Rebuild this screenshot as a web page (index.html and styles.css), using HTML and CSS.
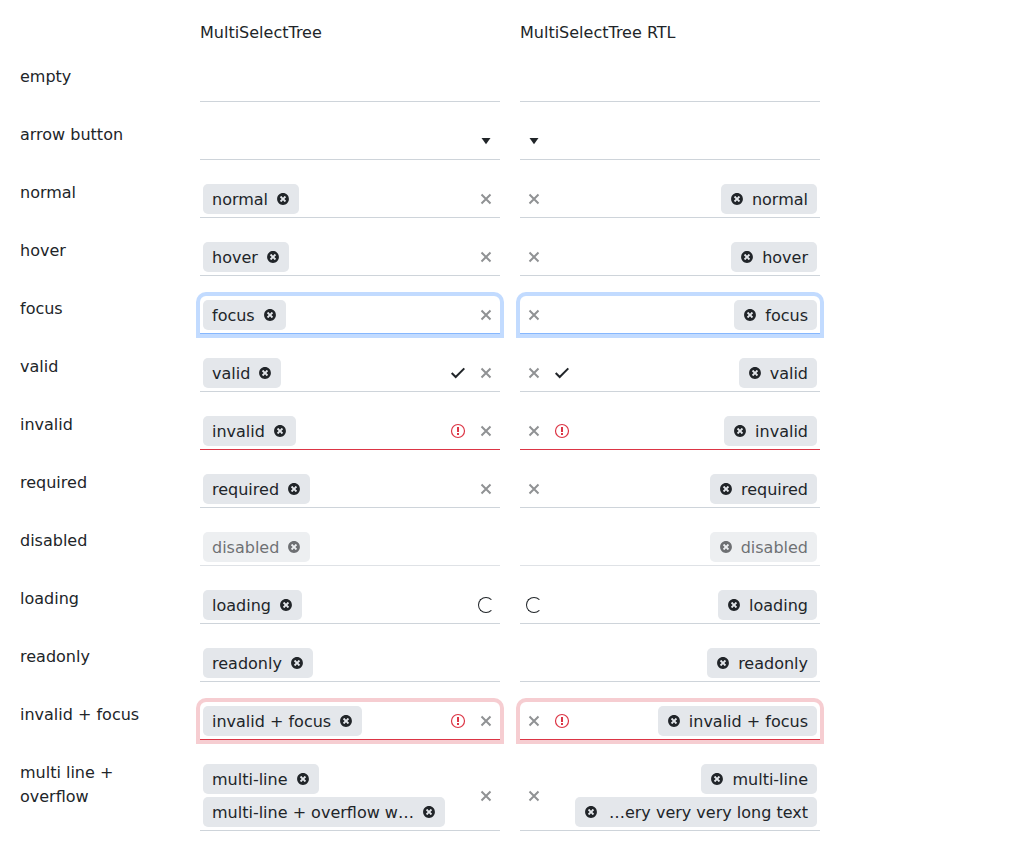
FILE: index.html
```
<!DOCTYPE html>
<html lang="en">
<head>
<meta charset="utf-8">
<title>MultiSelectTree</title>
<link rel="stylesheet" href="styles.css">
</head>
<body>
<svg class="sprite" aria-hidden="true">
  <symbol id="remove" viewBox="4 4 504 504"><path fill="currentColor" d="M256 8C119 8 8 119 8 256s111 248 248 248 248-111 248-248S393 8 256 8zm121.600 313.100c4.700 4.700 4.700 12.300 0 17L338 377.600c-4.700 4.700-12.300 4.700-17 0L256 312l-65.100 65.600c-4.700 4.700-12.300 4.700-17 0L134.400 338c-4.700-4.700-4.700-12.300 0-17l65.600-65-65.600-65.100c-4.700-4.700-4.700-12.300 0-17l39.600-39.600c4.700-4.700 12.300-4.700 17 0l65 65.700 65.100-65.600c4.700-4.700 12.300-4.700 17 0l39.600 39.600c4.700 4.700 4.700 12.300 0 17L312 256l65.600 65.100z"/></symbol>
  <symbol id="clear" viewBox="0 0 16 16"><path fill="none" stroke="currentColor" stroke-width="2" d="M3.500 3.500l9 9M12.500 3.500l-9 9"/></symbol>
  <symbol id="check" viewBox="0 0 16 16"><path fill="none" stroke="currentColor" stroke-width="2" d="M1.700 8l4 4L14.300 3.400"/></symbol>
  <symbol id="alert" viewBox="0 0 16 16"><circle cx="8" cy="8" r="6.500" fill="none" stroke="currentColor" stroke-width="1.200"/><path fill="currentColor" d="M7 4h2v5H7zM7 10h2v2H7z"/></symbol>
  <symbol id="arrow" viewBox="0 0 16 16"><path fill="currentColor" d="M3.500 5h9L8 11.200z"/></symbol>
</svg>
<main class="states">
  <span></span>
  <div>MultiSelectTree</div>
  <div>MultiSelectTree RTL</div>

  <label for="empty-ltr">empty</label>
  <div class="field"><input class="entry" id="empty-ltr"></div>
  <div class="field" dir="rtl"><input class="entry" aria-label="empty"></div>

  <label for="arrow-ltr">arrow button</label>
  <div class="field"><input class="entry" id="arrow-ltr"><button class="action arrow" aria-label="Open"><svg class="icon"><use href="#arrow"/></svg></button></div>
  <div class="field" dir="rtl"><input class="entry" aria-label="arrow button"><button class="action arrow" aria-label="Open"><svg class="icon"><use href="#arrow"/></svg></button></div>

  <div id="normal">normal</div>
  <div class="field" role="group" aria-labelledby="normal"><div class="tags"><span class="tag"><span>normal</span><button class="remove" aria-label="Remove"><svg><use href="#remove"/></svg></button></span></div><button class="action" aria-label="Clear"><svg class="icon"><use href="#clear"/></svg></button></div>
  <div class="field" dir="rtl" role="group" aria-labelledby="normal"><div class="tags"><span class="tag"><span>normal</span><button class="remove" aria-label="Remove"><svg><use href="#remove"/></svg></button></span></div><button class="action" aria-label="Clear"><svg class="icon"><use href="#clear"/></svg></button></div>

  <div id="hover">hover</div>
  <div class="field" role="group" aria-labelledby="hover"><div class="tags"><span class="tag"><span>hover</span><button class="remove" aria-label="Remove"><svg><use href="#remove"/></svg></button></span></div><button class="action" aria-label="Clear"><svg class="icon"><use href="#clear"/></svg></button></div>
  <div class="field" dir="rtl" role="group" aria-labelledby="hover"><div class="tags"><span class="tag"><span>hover</span><button class="remove" aria-label="Remove"><svg><use href="#remove"/></svg></button></span></div><button class="action" aria-label="Clear"><svg class="icon"><use href="#clear"/></svg></button></div>

  <div id="focus">focus</div>
  <div class="field focus" role="group" aria-labelledby="focus"><div class="tags"><span class="tag"><span>focus</span><button class="remove" aria-label="Remove"><svg><use href="#remove"/></svg></button></span></div><button class="action" aria-label="Clear"><svg class="icon"><use href="#clear"/></svg></button></div>
  <div class="field focus" dir="rtl" role="group" aria-labelledby="focus"><div class="tags"><span class="tag"><span>focus</span><button class="remove" aria-label="Remove"><svg><use href="#remove"/></svg></button></span></div><button class="action" aria-label="Clear"><svg class="icon"><use href="#clear"/></svg></button></div>

  <div id="valid">valid</div>
  <div class="field" role="group" aria-labelledby="valid"><div class="tags"><span class="tag"><span>valid</span><button class="remove" aria-label="Remove"><svg><use href="#remove"/></svg></button></span></div><span class="status"><svg class="icon"><use href="#check"/></svg></span><button class="action" aria-label="Clear"><svg class="icon"><use href="#clear"/></svg></button></div>
  <div class="field" dir="rtl" role="group" aria-labelledby="valid"><div class="tags"><span class="tag"><span>valid</span><button class="remove" aria-label="Remove"><svg><use href="#remove"/></svg></button></span></div><span class="status"><svg class="icon"><use href="#check"/></svg></span><button class="action" aria-label="Clear"><svg class="icon"><use href="#clear"/></svg></button></div>

  <div id="invalid">invalid</div>
  <div class="field invalid" role="group" aria-labelledby="invalid"><div class="tags"><span class="tag"><span>invalid</span><button class="remove" aria-label="Remove"><svg><use href="#remove"/></svg></button></span></div><span class="status"><svg class="icon"><use href="#alert"/></svg></span><button class="action" aria-label="Clear"><svg class="icon"><use href="#clear"/></svg></button></div>
  <div class="field invalid" dir="rtl" role="group" aria-labelledby="invalid"><div class="tags"><span class="tag"><span>invalid</span><button class="remove" aria-label="Remove"><svg><use href="#remove"/></svg></button></span></div><span class="status"><svg class="icon"><use href="#alert"/></svg></span><button class="action" aria-label="Clear"><svg class="icon"><use href="#clear"/></svg></button></div>

  <div id="required">required</div>
  <div class="field" role="group" aria-labelledby="required"><div class="tags"><span class="tag"><span>required</span><button class="remove" aria-label="Remove"><svg><use href="#remove"/></svg></button></span></div><button class="action" aria-label="Clear"><svg class="icon"><use href="#clear"/></svg></button></div>
  <div class="field" dir="rtl" role="group" aria-labelledby="required"><div class="tags"><span class="tag"><span>required</span><button class="remove" aria-label="Remove"><svg><use href="#remove"/></svg></button></span></div><button class="action" aria-label="Clear"><svg class="icon"><use href="#clear"/></svg></button></div>

  <div id="disabled">disabled</div>
  <div class="field disabled" role="group" aria-labelledby="disabled"><div class="tags"><span class="tag"><span>disabled</span><button class="remove" disabled aria-label="Remove"><svg><use href="#remove"/></svg></button></span></div></div>
  <div class="field disabled" dir="rtl" role="group" aria-labelledby="disabled"><div class="tags"><span class="tag"><span>disabled</span><button class="remove" disabled aria-label="Remove"><svg><use href="#remove"/></svg></button></span></div></div>

  <div id="loading">loading</div>
  <div class="field" role="group" aria-labelledby="loading"><div class="tags"><span class="tag"><span>loading</span><button class="remove" aria-label="Remove"><svg><use href="#remove"/></svg></button></span></div><span class="status"><span class="spinner"></span></span></div>
  <div class="field" dir="rtl" role="group" aria-labelledby="loading"><div class="tags"><span class="tag"><span>loading</span><button class="remove" aria-label="Remove"><svg><use href="#remove"/></svg></button></span></div><span class="status"><span class="spinner"></span></span></div>

  <div id="readonly">readonly</div>
  <div class="field" role="group" aria-labelledby="readonly"><div class="tags"><span class="tag"><span>readonly</span><button class="remove" aria-label="Remove"><svg><use href="#remove"/></svg></button></span></div></div>
  <div class="field" dir="rtl" role="group" aria-labelledby="readonly"><div class="tags"><span class="tag"><span>readonly</span><button class="remove" aria-label="Remove"><svg><use href="#remove"/></svg></button></span></div></div>

  <div id="invalid-focus">invalid + focus</div>
  <div class="field invalid focus" role="group" aria-labelledby="invalid-focus"><div class="tags"><span class="tag"><span>invalid + focus</span><button class="remove" aria-label="Remove"><svg><use href="#remove"/></svg></button></span></div><span class="status"><svg class="icon"><use href="#alert"/></svg></span><button class="action" aria-label="Clear"><svg class="icon"><use href="#clear"/></svg></button></div>
  <div class="field invalid focus" dir="rtl" role="group" aria-labelledby="invalid-focus"><div class="tags"><span class="tag"><span>invalid + focus</span><button class="remove" aria-label="Remove"><svg><use href="#remove"/></svg></button></span></div><span class="status"><svg class="icon"><use href="#alert"/></svg></span><button class="action" aria-label="Clear"><svg class="icon"><use href="#clear"/></svg></button></div>

  <div id="multi">multi line + overflow</div>
  <div class="field" role="group" aria-labelledby="multi"><div class="tags"><span class="tag"><span>multi-line</span><button class="remove" aria-label="Remove"><svg><use href="#remove"/></svg></button></span><span class="tag long"><span>multi-line + overflow w…</span><button class="remove" aria-label="Remove"><svg><use href="#remove"/></svg></button></span></div><button class="action" aria-label="Clear"><svg class="icon"><use href="#clear"/></svg></button></div>
  <div class="field" dir="rtl" role="group" aria-labelledby="multi"><div class="tags"><span class="tag"><span>multi-line</span><button class="remove" aria-label="Remove"><svg><use href="#remove"/></svg></button></span><span class="tag long"><span dir="ltr">…ery very very long text</span><button class="remove" aria-label="Remove"><svg><use href="#remove"/></svg></button></span></div><button class="action" aria-label="Clear"><svg class="icon"><use href="#clear"/></svg></button></div>
</main>
</body>
</html>
```
FILE: styles.css
```
* {
  box-sizing: border-box;
}

body {
  margin: 0;
  background: #fff;
  color: #212529;
  font: 16px/24px "DejaVu Sans", sans-serif;
}

button,
input {
  margin: 0;
  padding: 0;
  border: 0;
  background: none;
  color: inherit;
  font: inherit;
}

.sprite {
  display: none;
}

.states {
  display: grid;
  grid-template-rows: 24px;
  grid-template-columns: 160px 1fr 1fr;
  gap: 20px;
  max-width: 840px;
  padding: 20px;
}

.states > :not(.field) {
  padding-top: 1px;
}

.field {
  display: flex;
  min-height: 38px;
  border-bottom: 1px solid #ced4da;
}

.field.focus {
  border-color: #86b7fe;
  border-radius: 6px 6px 0 0;
  box-shadow: 0 0 0 4px #c2dbff;
}

.field.invalid {
  border-color: #dc3545;
}

.field.invalid.focus {
  box-shadow: 0 0 0 4px #f6cdd1;
}

.field.disabled {
  opacity: 0.65;
}

.entry {
  flex: 1;
  min-width: 0;
  padding: 0 12px;
  outline: 0;
}

.tags {
  display: flex;
  flex: 1;
  flex-wrap: wrap;
  gap: 3px;
  min-width: 0;
  padding: 4px 3px 3px;
}

.tag {
  display: flex;
  align-items: center;
  gap: 9px;
  height: 30px;
  padding-inline: 9px 10px;
  border-radius: 5px;
  background: #e4e7eb;
  white-space: nowrap;
}

.tag > span {
  flex: 1;
  padding-top: 2px;
}

.tag.long {
  min-width: 242px;
}

[dir="rtl"] .tag > span {
  text-align: right;
}

.remove,
.remove svg {
  display: block;
  width: 12px;
  height: 12px;
}

.action,
.status {
  display: flex;
  flex: none;
  align-items: center;
  justify-content: center;
  width: 28px;
  padding-top: 1px;
}

.action {
  color: #909294;
}

.action.arrow {
  color: #212529;
}

.invalid .status {
  color: #dc3545;
}

.icon {
  width: 16px;
  height: 16px;
}

.spinner {
  width: 16px;
  height: 16px;
  border: 1px solid #212529;
  border-right-color: transparent;
  border-radius: 50%;
}
```
